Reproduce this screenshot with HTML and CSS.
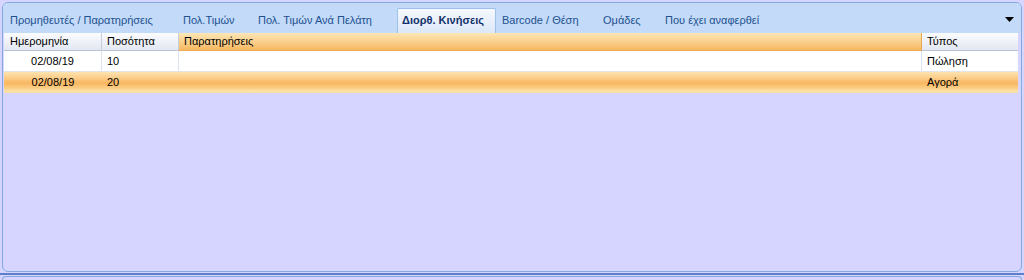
FILE: index.html
```html
<!DOCTYPE html>
<html>
<head>
<meta charset="utf-8">
<link rel="stylesheet" href="styles.css">
</head>
<body>
<div class="page">
  <div class="panel">
    <div class="tabstrip">
      <div class="tabs">
        <div class="tab t1">Προμηθευτές / Παρατηρήσεις</div>
        <div class="tab t2">Πολ.Τιμών</div>
        <div class="tab t3">Πολ. Τιμών Ανά Πελάτη</div>
        <div class="tab t4 active">Διορθ. Κινήσεις</div>
        <div class="tab t5">Barcode / Θέση</div>
        <div class="tab t6">Ομάδες</div>
        <div class="tab t7">Που έχει αναφερθεί</div>
      </div>
      <svg class="dropdown" width="9" height="5" viewBox="0 0 9 5"><path d="M0 0H9L4.5 5Z" fill="#000"/></svg>
    </div>
    <div class="grid">
      <div class="row head">
        <div class="cell c-date">Ημερομηνία</div>
        <div class="cell c-qty">Ποσότητα</div>
        <div class="cell c-notes sorted">Παρατηρήσεις</div>
        <div class="cell c-type">Τύπος</div>
      </div>
      <div class="row data">
        <div class="cell c-date center">02/08/19</div>
        <div class="cell c-qty">10</div>
        <div class="cell c-notes"></div>
        <div class="cell c-type">Πώληση</div>
      </div>
      <div class="row data selected">
        <div class="cell c-date center">02/08/19</div>
        <div class="cell c-qty">20</div>
        <div class="cell c-notes"></div>
        <div class="cell c-type">Αγορά</div>
      </div>
    </div>
  </div>
  <div class="divider"></div>
  <div class="panel next"></div>
</div>
</body>
</html>
```

FILE: styles.css
```css
* { box-sizing: border-box; }
html, body {
  margin: 0;
  padding: 0;
  background: #d5d5ff;
  width: 1024px;
  height: 280px;
  overflow: hidden;
  font-family: "Liberation Sans", Arial, sans-serif;
  font-size: 11px;
}
.page {
  padding-top: 2px;
}
.panel {
  margin: 0 2px;
  height: 270px;
  border: 1px solid #86a8e0;
  border-radius: 6px;
  background: #d5d5ff;
  overflow: hidden;
}
.tabstrip {
  height: 30px;
  background: #c3daf9;
  display: flex;
  align-items: flex-end;
  justify-content: space-between;
  padding-right: 7px;
}
.tabs {
  display: flex;
  align-items: flex-end;
  height: 25px;
}
.tab {
  flex: none;
  height: 25px;
  line-height: 24px;
  padding: 0 0 0 12px;
  color: #22518f;
  white-space: nowrap;
}
.t1 { width: 168px; padding-left: 7px; }
.t2 { width: 75px; }
.t3 { width: 151px; }
.t5 { width: 95px; padding-left: 6px; }
.t6 { width: 62px; }
.t7 { width: auto; }
.tab.active {
  width: 99px;
  padding-left: 4px;
  background: linear-gradient(#f6f9fe, #dce8f8);
  border: 1px solid #9cc0ea;
  border-bottom: none;
  border-radius: 2px 2px 0 0;
  color: #13306a;
  font-weight: bold;
  line-height: 23px;
}
.dropdown {
  align-self: center;
  margin-top: 2px;
}
.grid {
  margin: 0 3px 0 1px;
}
.row {
  display: flex;
}
.cell {
  padding: 0 5px;
  white-space: nowrap;
  color: #000;
}
.c-date { width: 98px; }
.c-qty { width: 77px; }
.c-notes { flex: 1; }
.c-type { width: 96px; }
.center { text-align: center; }
.head {
  height: 18px;
}
.head .cell {
  line-height: 17px;
  background: linear-gradient(#fbfcfe, #e2e7f1);
  border-right: 1px solid #c5cedd;
  border-bottom: 1px solid #b9c4d6;
}
.head .c-date { padding-left: 6px; }
.head .sorted {
  background: linear-gradient(#fde6b6, #f8c77c 70%, #f5b761);
  border-right: 1px solid #e8a850;
  border-bottom: 1px solid #eeaa55;
}
.head .c-type { border-right: none; }
.data {
  height: 21px;
  background: #fff;
  border-bottom: 1px solid #e3e3ea;
}
.data .cell {
  line-height: 20px;
  border-right: 1px solid #dde3ee;
}
.data .c-type { border-right: none; }
.selected {
  background: linear-gradient(#fde3b0, #fbc982 35%, #f9b660 55%, #fbcd85 80%, #fde6ad);
  border-bottom: 1px solid #f6dca4;
}
.selected .cell {
  border-right: none;
}
.divider {
  height: 2px;
  margin: 1px 0;
  background: #5d80c8;
}
.panel.next {
  height: 4px;
  border-bottom: none;
  border-radius: 6px 6px 0 0;
}
```
